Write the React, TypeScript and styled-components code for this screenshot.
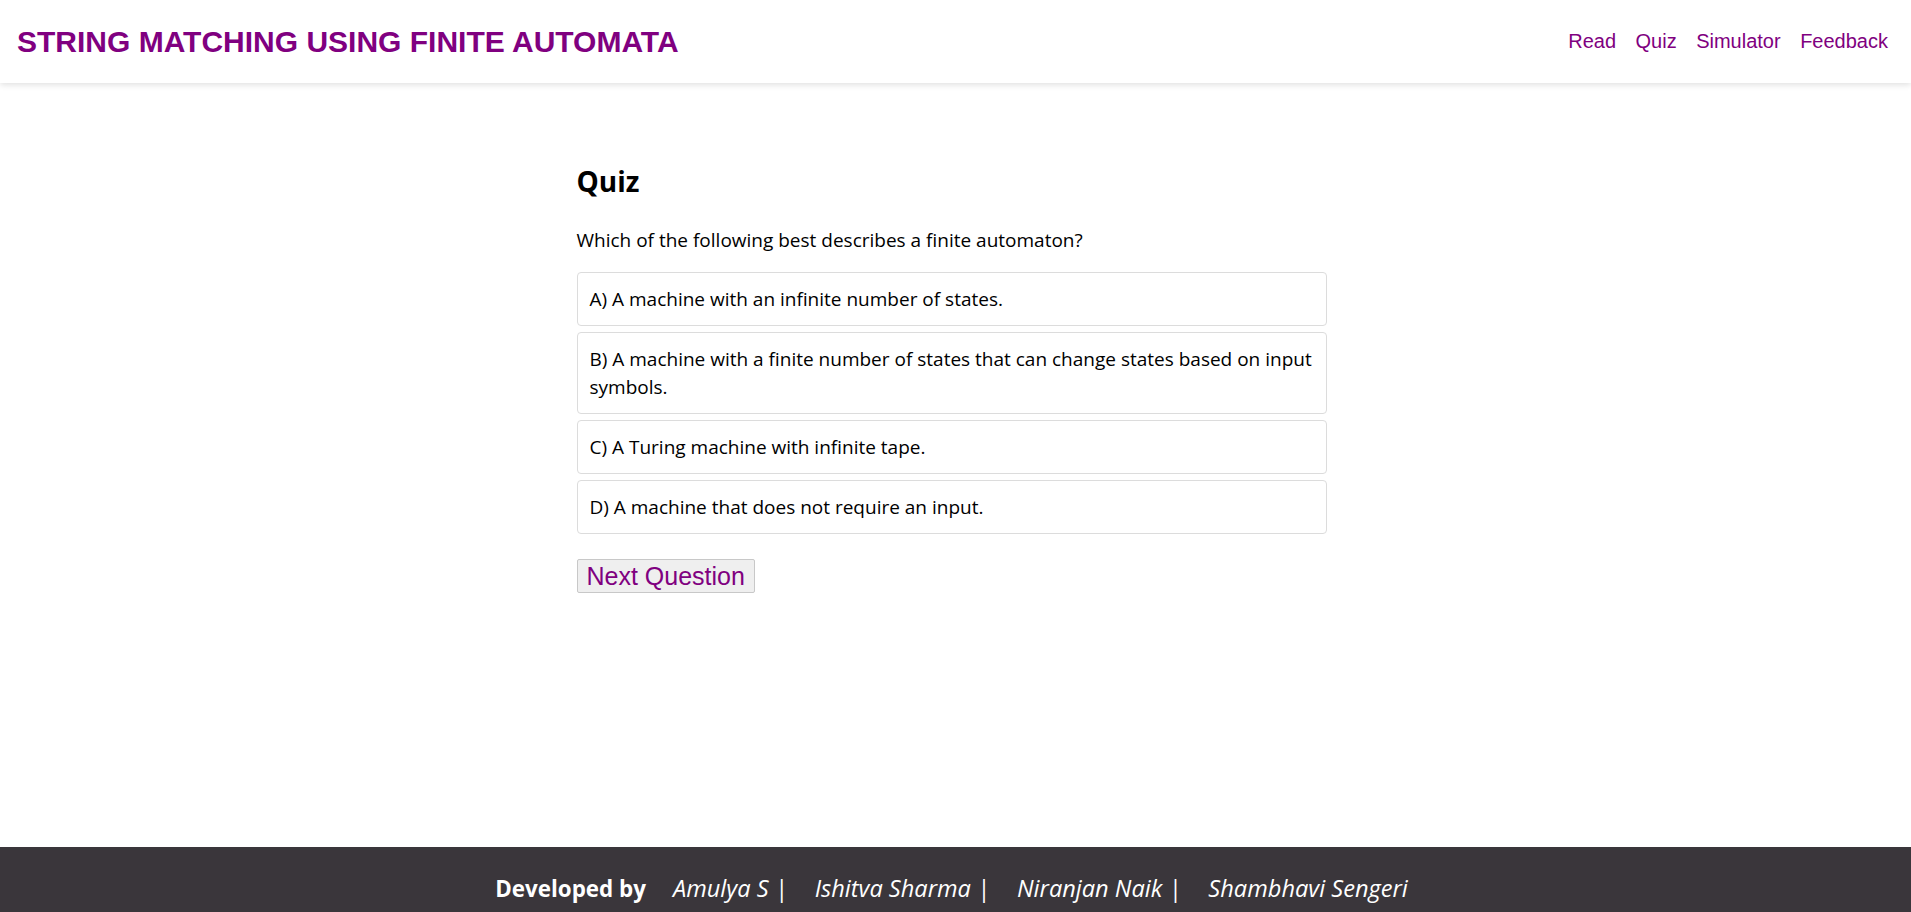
import React, { useState } from 'react'
import styled, { createGlobalStyle } from 'styled-components'

const GlobalStyle = createGlobalStyle`
  html, body {
    margin: 0;
    padding: 0;
    background: #fff;
  }
  body {
    font-family: "Open Sans", "Noto Sans", sans-serif;
    color: #000;
  }
`

const Header = styled.header`
  display: flex;
  align-items: center;
  justify-content: space-between;
  height: 83px;
  padding: 0 23px 0 17px;
  background: #fff;
  box-shadow: 0 2px 6px rgba(0, 0, 0, 0.12);
  position: relative;
  z-index: 1;
`

const Title = styled.h1`
  margin: 0;
  font-family: "Liberation Sans", Arial, sans-serif;
  font-size: 30px;
  font-weight: bold;
  color: #800080;
`

const Nav = styled.nav`
  display: flex;
  gap: 19.5px;
`

const NavLink = styled.a`
  font-family: "Liberation Sans", Arial, sans-serif;
  font-size: 20px;
  color: #800080;
  text-decoration: none;
  cursor: pointer;
`

const Main = styled.main`
  min-height: calc(100vh - 148px);
  padding: 0 8px 0 0;
  box-sizing: border-box;
`

const QuizSection = styled.section`
  width: 750px;
  margin: 0 auto;
  padding-top: 82px;
`

const Heading = styled.h2`
  margin: 0 0 28px;
  font-size: 28px;
  font-weight: 700;
  line-height: 1.2;
`

const Question = styled.p`
  margin: 0 0 18px;
  font-size: 19px;
  line-height: 27px;
`

const Options = styled.div`
  display: flex;
  flex-direction: column;
  gap: 6px;
`

const Option = styled.div<{ $selected?: boolean }>`
  padding: 12px;
  border: 1px solid #dcdcdc;
  border-radius: 4px;
  font-size: 19px;
  line-height: 28px;
  background: ${({ $selected }) => ($selected ? '#f3e6f3' : '#fff')};
  cursor: pointer;
`

const NextButton = styled.button`
  margin-top: 25px;
  padding: 2px 9px;
  font-family: "Liberation Sans", Arial, sans-serif;
  font-size: 25px;
  line-height: 28px;
  color: #800080;
  background: #efefef;
  border: 1px solid #c8c8c8;
  border-radius: 2px;
  cursor: pointer;
`

const Footer = styled.footer`
  background: #3a363b;
  color: #fff;
  padding: 26px 8px 26px 0;
  display: flex;
  justify-content: center;
  align-items: baseline;
  line-height: 30px;
`

const DevLabel = styled.strong`
  font-size: 22.4px;
  font-weight: 700;
`

const Name = styled.span`
  font-size: 23.6px;
  font-style: italic;
  margin-left: 27px;
`

const options = [
  'A) A machine with an infinite number of states.',
  'B) A machine with a finite number of states that can change states based on input symbols.',
  'C) A Turing machine with infinite tape.',
  'D) A machine that does not require an input.',
]

const names = ['Amulya S |', 'Ishitva Sharma |', 'Niranjan Naik |', 'Shambhavi Sengeri']

export default function App() {
  const [selected, setSelected] = useState<number | null>(null)

  return (
    <>
      <GlobalStyle />
      <Header>
        <Title>STRING MATCHING USING FINITE AUTOMATA</Title>
        <Nav>
          <NavLink>Read</NavLink>
          <NavLink>Quiz</NavLink>
          <NavLink>Simulator</NavLink>
          <NavLink>Feedback</NavLink>
        </Nav>
      </Header>
      <Main>
        <QuizSection>
          <Heading>Quiz</Heading>
          <Question>Which of the following best describes a finite automaton?</Question>
          <Options>
            {options.map((text, i) => (
              <Option key={i} $selected={selected === i} onClick={() => setSelected(i)}>
                {text}
              </Option>
            ))}
          </Options>
          <NextButton>Next Question</NextButton>
        </QuizSection>
      </Main>
      <Footer>
        <DevLabel>Developed by</DevLabel>
        {names.map((n) => (
          <Name key={n}>{n}</Name>
        ))}
      </Footer>
    </>
  )
}
